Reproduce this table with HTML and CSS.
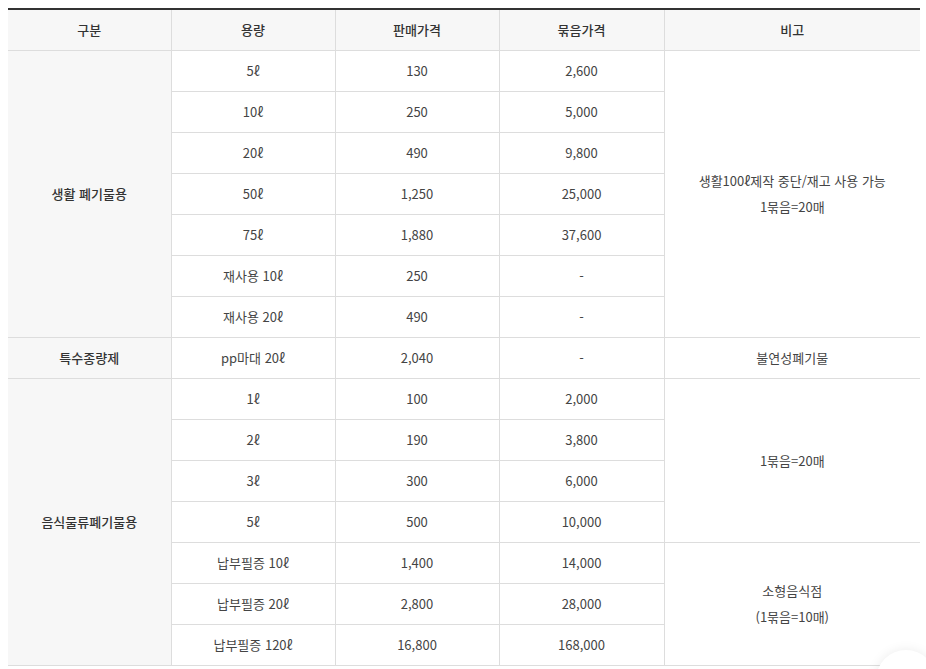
FILE: index.html
```html
<!DOCTYPE html>
<html lang="ko">
<head>
<meta charset="utf-8">
<link rel="stylesheet" href="styles.css">
</head>
<body>
<table class="price-table">
  <colgroup>
    <col class="c1"><col class="c2"><col class="c3"><col class="c4"><col class="c5">
  </colgroup>
  <thead>
    <tr><th>구분</th><th>용량</th><th>판매가격</th><th>묶음가격</th><th>비고</th></tr>
  </thead>
  <tbody>
    <tr><th rowspan="7" class="cat">생활 폐기물용</th><td>5ℓ</td><td>130</td><td>2,600</td><td rowspan="7">생활100ℓ제작 중단/재고 사용 가능<br>1묶음=20매</td></tr>
    <tr><td>10ℓ</td><td>250</td><td>5,000</td></tr>
    <tr><td>20ℓ</td><td>490</td><td>9,800</td></tr>
    <tr><td>50ℓ</td><td>1,250</td><td>25,000</td></tr>
    <tr><td>75ℓ</td><td>1,880</td><td>37,600</td></tr>
    <tr><td>재사용 10ℓ</td><td>250</td><td>-</td></tr>
    <tr><td>재사용 20ℓ</td><td>490</td><td>-</td></tr>
    <tr><th class="cat">특수종량제</th><td>pp마대 20ℓ</td><td>2,040</td><td>-</td><td>불연성폐기물</td></tr>
    <tr><th rowspan="7" class="cat">음식물류폐기물용</th><td>1ℓ</td><td>100</td><td>2,000</td><td rowspan="4">1묶음=20매</td></tr>
    <tr><td>2ℓ</td><td>190</td><td>3,800</td></tr>
    <tr><td>3ℓ</td><td>300</td><td>6,000</td></tr>
    <tr><td>5ℓ</td><td>500</td><td>10,000</td></tr>
    <tr><td>납부필증 10ℓ</td><td>1,400</td><td>14,000</td><td rowspan="3">소형음식점<br>(1묶음=10매)</td></tr>
    <tr><td>납부필증 20ℓ</td><td>2,800</td><td>28,000</td></tr>
    <tr><td>납부필증 120ℓ</td><td>16,800</td><td>168,000</td></tr>
  </tbody>
</table>
<div class="float-btn"></div>
</body>
</html>
```

FILE: styles.css
```css
html, body {
  margin: 0;
  padding: 0;
  background: #fff;
  overflow: hidden;
}
html { height: 669px; }
body {
  padding: 8px 6px 0 8px;
  font-family: "Noto Sans CJK KR", "Noto Sans", sans-serif;
  color: #333;
  height: 669px;
  box-sizing: border-box;
  position: relative;
}
.price-table {
  width: 912px;
  border-collapse: collapse;
  table-layout: fixed;
  border-top: 2px solid #333;
  font-size: 13px;
}
.c1 { width: 163px; }
.c2 { width: 164px; }
.c3 { width: 164px; }
.c4 { width: 165px; }
.price-table th,
.price-table td {
  height: 40px;
  padding: 0;
  text-align: center;
  vertical-align: middle;
  border: 1px solid #ddd;
  line-height: 26px;
  color: #333;
}
.price-table tr > :first-child { border-left: none; }
.price-table tr > :last-child { border-right: none; }
.price-table thead th {
  background: #f7f7f7;
  font-weight: 500;
  height: 40px;
}
.price-table th.cat {
  background: #f7f7f7;
  font-weight: 500;
}
.price-table td {
  font-weight: 400;
  color: #444;
}
.float-btn {
  position: absolute;
  left: 876px;
  top: 650px;
  width: 60px;
  height: 60px;
  border-radius: 50%;
  background: #fff;
  box-shadow: 0 0 12px rgba(0,0,0,0.08);
}
```
